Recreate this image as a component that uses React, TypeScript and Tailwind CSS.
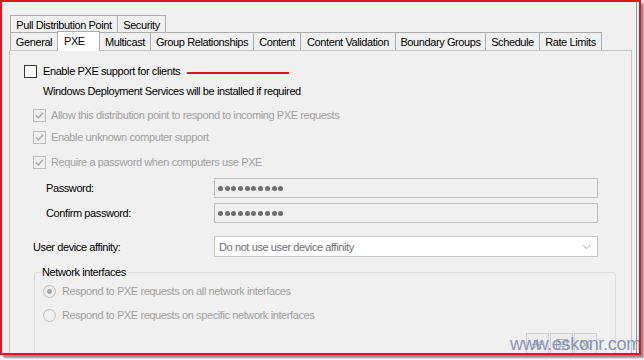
import React from "react";

const font = "font-['Liberation_Sans',Arial,sans-serif] text-[11px] tracking-[-0.4px] leading-[14px]";

function Tab({ label, w, first }: { label: string; w: string; first?: boolean }) {
  return (
    <div
      className={`${w} ${first ? "" : "-ml-px"} h-[18px] flex items-center justify-center border border-b-0 border-[#acacac] bg-[#f0f0f0] text-black`}
    >
      {label}
    </div>
  );
}

function DisabledCheck({ label }: { label: string }) {
  return (
    <div className="ml-[23px] h-[18px] flex items-center gap-[5px]">
      <span className="w-[13px] h-[13px] border border-[#bcbcbc] bg-[#f0f0f0] flex items-center justify-center">
        <svg width="11" height="11" viewBox="0 0 11 11">
          <path d="M2 5.6 L4.4 8 L9 2.8" fill="none" stroke="#a9a9a9" strokeWidth="1.4" />
        </svg>
      </span>
      <span className="text-[#a0a0a0]">{label}</span>
    </div>
  );
}

function Dots() {
  return (
    <div className="flex items-center gap-[1.7px] pl-[3px]">
      {Array.from({ length: 10 }).map((_, i) => (
        <span key={i} className="w-[5px] h-[5px] rounded-full bg-[#6e6e6e]" />
      ))}
    </div>
  );
}

function Radio({ label, checked }: { label: string; checked?: boolean }) {
  return (
    <div className="h-[18px] flex items-center gap-[6px]">
      <span className="w-[13px] h-[13px] rounded-full border border-[#bcbcbc] bg-[#f0f0f0] flex items-center justify-center">
        {checked && <span className="w-[5px] h-[5px] rounded-full bg-[#a6a6a6]" />}
      </span>
      <span className="text-[#a0a0a0]">{label}</span>
    </div>
  );
}

function ToolButton({ children }: { children: React.ReactNode }) {
  return (
    <div className="w-[23px] h-[23px] border border-[#cfcfcf] bg-[#ededed] flex items-center justify-center">
      {children}
    </div>
  );
}

export default function App() {
  return (
    <div className={`w-[644px] h-[360px] bg-white overflow-hidden ${font}`}>
      <div className="relative w-[641px] h-[355px] border-2 border-[#e8141b] bg-[#f0f0f0] overflow-hidden flex shadow-[3px_3px_2px_rgba(0,0,0,0.45)]">
        {/* Dialog body */}
        <div className="w-[635px] shrink-0 border-r border-[#9a9a9a] pt-[13px] pl-[7px]">
          {/* Tab rows */}
          <div className="ml-px flex">
            <Tab label="Pull Distribution Point" w="w-[108px]" first />
            <Tab label="Security" w="w-[49px]" />
          </div>
          <div className="ml-px -mt-[2px] flex items-end">
            <Tab label="General" w="w-[48px]" first />
            <div className="-ml-px w-[43px] h-[20px] -mb-px relative z-10 bg-white border border-b-0 border-[#acacac] pl-[6px] pt-[2px] text-black">
              PXE
            </div>
            <Tab label="Multicast" w="w-[52px]" />
            <Tab label="Group Relationships" w="w-[104px]" />
            <Tab label="Content" w="w-[48px]" />
            <Tab label="Content Validation" w="w-[96px]" />
            <Tab label="Boundary Groups" w="w-[91px]" />
            <Tab label="Schedule" w="w-[55px]" />
            <Tab label="Rate Limits" w="w-[63px]" />
          </div>

          {/* Tab page */}
          <div className="w-[623px] border border-[#c4c4c4] bg-[#f0f0f0] pb-[20px]">
            <div className="mt-[11px] ml-[14px] h-[18px] flex items-center">
              <span className="w-[13px] h-[13px] border border-[#333333] bg-white" />
              <span className="ml-[6px] text-black">Enable PXE support for clients</span>
              <span className="ml-[7px] w-[102px] h-[2px] bg-[#e8141b] translate-y-[2px]" />
            </div>
            <div className="mt-[2px] ml-[33px] h-[18px] flex items-center text-black">
              Windows Deployment Services will be installed if required
            </div>
            <div className="mt-[6px]">
              <DisabledCheck label="Allow this distribution point to respond to incoming PXE requests" />
            </div>
            <div className="mt-[4px]">
              <DisabledCheck label="Enable unknown computer support" />
            </div>
            <div className="mt-[7px]">
              <DisabledCheck label="Require a password when computers use PXE" />
            </div>

            <div className="mt-[7px] ml-[36px] h-[20px] flex items-center">
              <span className="w-[168px] text-black">Password:</span>
              <div className="w-[384px] h-[20px] border border-[#bfbfbf] bg-[#f0f0f0] flex items-center">
                <Dots />
              </div>
            </div>
            <div className="mt-[5px] ml-[36px] h-[20px] flex items-center">
              <span className="w-[168px] text-black">Confirm password:</span>
              <div className="w-[384px] h-[20px] border border-[#bfbfbf] bg-[#f0f0f0] flex items-center">
                <Dots />
              </div>
            </div>

            <div className="mt-[13px] ml-[23px] h-[21px] flex items-center">
              <span className="w-[181px] text-black">User device affinity:</span>
              <div className="w-[384px] h-[21px] border border-[#c8c8c8] bg-white flex items-center justify-between pl-[4px] pr-[6px]">
                <span className="text-[#6d6d6d]">Do not use user device affinity</span>
                <svg width="9" height="6" viewBox="0 0 9 6">
                  <path d="M0.5 0.8 L4.5 4.8 L8.5 0.8" fill="none" stroke="#a6a6a6" strokeWidth="1" />
                </svg>
              </div>
            </div>

            <fieldset className="mt-[8px] ml-[24px] w-[582px] h-[110px] border border-[#dcdcdc] rounded-[3px] pl-[8px] pr-[18px]">
              <legend className="-ml-[2px] px-[1px] text-black">Network interfaces</legend>
              <div className="mt-[3px]">
                <Radio label="Respond to PXE requests on all network interfaces" checked />
              </div>
              <div className="mt-[6px]">
                <Radio label="Respond to PXE requests on specific network interfaces" />
              </div>
              <div className="mt-[9px] flex justify-end gap-[1px]">
                <ToolButton>
                  <svg width="13" height="13" viewBox="0 0 13 13" stroke="#b4b4b4" strokeWidth="1.2">
                    <path d="M6.5 1 V12 M1 6.5 H12 M2.6 2.6 L10.4 10.4 M10.4 2.6 L2.6 10.4" />
                  </svg>
                </ToolButton>
                <ToolButton>
                  <svg width="14" height="13" viewBox="0 0 14 13" fill="none" stroke="#b4b4b4" strokeWidth="1">
                    <rect x="1.5" y="1.5" width="11" height="10" />
                    <path d="M1.5 4 H12.5 M3.5 6.5 H10.5 M3.5 8.5 H10.5" />
                  </svg>
                </ToolButton>
                <ToolButton>
                  <svg width="13" height="13" viewBox="0 0 13 13" stroke="#b4b4b4" strokeWidth="1.5">
                    <path d="M2 2 L11 11 M11 2 L2 11" />
                  </svg>
                </ToolButton>
              </div>
            </fieldset>
          </div>
        </div>

        {/* Watermark */}
        <div className="absolute left-[508px] top-[333px] text-lg leading-[18px] tracking-[-0.3px] text-[#7d8db0] opacity-90">
          www.eskonr.com
        </div>
      </div>
    </div>
  );
}
